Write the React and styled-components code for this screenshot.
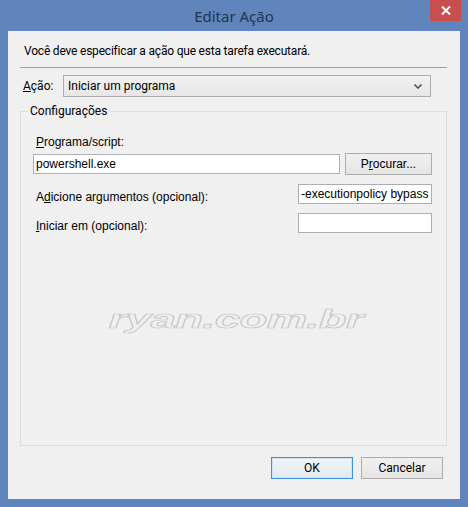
import React from "react";
import styled, { createGlobalStyle } from "styled-components";

const Global = createGlobalStyle`
  html, body { margin: 0; padding: 0; background: #5f84bd; }
  #root { width: 468px; height: 507px; }
`;

const UI = `Roboto, "Noto Sans", sans-serif`;
const TITLE = `"Noto Sans", sans-serif`;
const WF = `"Liberation Sans", Arial, sans-serif`;

const Window = styled.div`
  width: 468px;
  height: 507px;
  box-sizing: border-box;
  background: #6084bc;
  display: flex;
  flex-direction: column;
`;

const TitleBar = styled.div`
  height: 31px;
  display: grid;
  grid-template-columns: 1fr auto 1fr;
  align-items: start;
`;

const Title = styled.div`
  grid-column: 2;
  font-family: ${TITLE};
  font-size: 15px;
  line-height: 20px;
  padding-top: 6px;
  color: #233450;
`;

const CloseBtn = styled.div`
  grid-column: 3;
  justify-self: end;
  margin-right: 7px;
  width: 31px;
  height: 21px;
  background: #c84f4d;
  display: flex;
  align-items: center;
  justify-content: center;
`;

const Client = styled.div`
  flex: 1;
  margin: 0 8px 8px 8px;
  background: #f0f0f0;
  display: flex;
  flex-direction: column;
  padding: 12px 13px 0 12px;
  box-sizing: border-box;
`;

const Intro = styled.div`
  font-family: ${UI};
  font-size: 12px;
  letter-spacing: -0.2px;
  line-height: 16px;
  color: #000;
  padding-left: 4px;
`;

const Separator = styled.div`
  height: 1px;
  background: #a0a0a0;
  margin-top: 8px;
`;

const ActionRow = styled.div`
  display: flex;
  align-items: center;
  margin-top: 7px;
  height: 22px;
`;

const UILabel = styled.span`
  font-family: ${UI};
  font-size: 12px;
  color: #000;
  width: ${(p) => p.$w || "auto"};
  padding-left: 3px;
  box-sizing: border-box;
`;

const Select = styled.div`
  width: 368px;
  height: 22px;
  box-sizing: border-box;
  border: 1px solid #acacac;
  background: linear-gradient(#f2f2f2, #e6e6e6);
  display: flex;
  align-items: center;
  justify-content: space-between;
  padding: 0 8px 0 4px;
  font-family: ${UI};
  font-size: 12px;
  color: #000;
`;

const Group = styled.fieldset`
  flex: 1;
  margin: 5px 0 0 0;
  padding: 14px 14px 0 12px;
  border: 1px solid #dcdcdc;
  display: flex;
  flex-direction: column;
  min-width: 0;
`;

const Legend = styled.legend`
  font-family: ${UI};
  font-size: 12px;
  line-height: 18px;
  color: #000;
  padding: 0 2px;
  margin-left: -5px;
`;

const WLabel = styled.div`
  font-family: ${WF};
  font-size: 12px;
  line-height: 16px;
  color: #000;
  padding-left: 3px;
  padding-top: ${(p) => p.$top || "0px"};
`;

const Row = styled.div`
  display: flex;
  align-items: center;
  justify-content: space-between;
  margin-top: ${(p) => p.$mt || "0px"};
`;

const TextBox = styled.div`
  width: ${(p) => p.$w};
  height: 20px;
  box-sizing: border-box;
  border: 1px solid #abadb3;
  background: #fff;
  font-family: ${WF};
  font-size: 12px;
  line-height: 18px;
  padding-left: 2px;
  white-space: nowrap;
  overflow: hidden;
  color: #000;
`;

const Button = styled.div`
  width: ${(p) => p.$w || "82px"};
  height: 22px;
  box-sizing: border-box;
  border: 1px solid ${(p) => (p.$default ? "#3c8fd8" : "#acacac")};
  background: ${(p) =>
    p.$default
      ? "linear-gradient(#f0f4f8, #e3e9ef)"
      : "linear-gradient(#f0f0f0, #e5e5e5)"};
  box-shadow: ${(p) => (p.$default ? "inset 0 0 0 1px #cfe4f7" : "none")};
  display: flex;
  align-items: center;
  justify-content: center;
  font-family: ${(p) => (p.$wf ? WF : UI)};
  font-size: 12px;
  color: #000;
`;

const Watermark = styled.div`
  flex: 1;
  display: flex;
  justify-content: center;
  align-items: flex-start;
  padding-top: 71px;
`;

const WaterText = styled.span`
  display: inline-block;
  font-family: ${WF};
  font-style: italic;
  font-weight: bold;
  font-size: 25px;
  letter-spacing: -0.3px;
  color: #f0f0f0;
  -webkit-text-stroke: 0.7px #c4c4c4;
  transform: scaleX(1.82);
  margin-left: 6px;
`;

const Footer = styled.div`
  display: flex;
  justify-content: flex-end;
  gap: 8px;
  padding: 11px 4px 20px 0;
`;

const U = styled.span`
  text-decoration: underline;
  text-underline-offset: 1px;
`;

export default function App() {
  return (
    <>
      <Global />
      <Window>
        <TitleBar>
          <Title>Editar Ação</Title>
          <CloseBtn>
            <svg width="10" height="9" viewBox="0 0 10 9">
              <path d="M1 0.5 L9 8.5 M9 0.5 L1 8.5" stroke="#fff" strokeWidth="2" />
            </svg>
          </CloseBtn>
        </TitleBar>
        <Client>
          <Intro>Você deve especificar a ação que esta tarefa executará.</Intro>
          <Separator />
          <ActionRow>
            <UILabel $w="43px">
              <U>A</U>ção:
            </UILabel>
            <Select>
              <span>Iniciar um programa</span>
              <svg width="8" height="5" viewBox="0 0 8 5">
                <path d="M0.5 0.5 L4 4 L7.5 0.5" stroke="#555" strokeWidth="1.6" fill="none" />
              </svg>
            </Select>
          </ActionRow>
          <Group>
            <Legend>Configurações</Legend>
            <WLabel>
              <U>P</U>rograma/script:
            </WLabel>
            <Row $mt="3px">
              <TextBox $w="307px">powershell.exe</TextBox>
              <Button $w="87px" $wf>
                P<U>r</U>ocurar...
              </Button>
            </Row>
            <Row $mt="8px">
              <WLabel $top="6px">
                A<U>d</U>icione argumentos (opcional):
              </WLabel>
              <TextBox $w="134px">-executionpolicy bypass</TextBox>
            </Row>
            <Row $mt="7px">
              <WLabel $top="6px">
                <U>I</U>niciar em (opcional):
              </WLabel>
              <TextBox $w="134px"></TextBox>
            </Row>
            <Watermark>
              <WaterText>ryan.com.br</WaterText>
            </Watermark>
          </Group>
          <Footer>
            <Button $default>OK</Button>
            <Button>Cancelar</Button>
          </Footer>
        </Client>
      </Window>
    </>
  );
}
